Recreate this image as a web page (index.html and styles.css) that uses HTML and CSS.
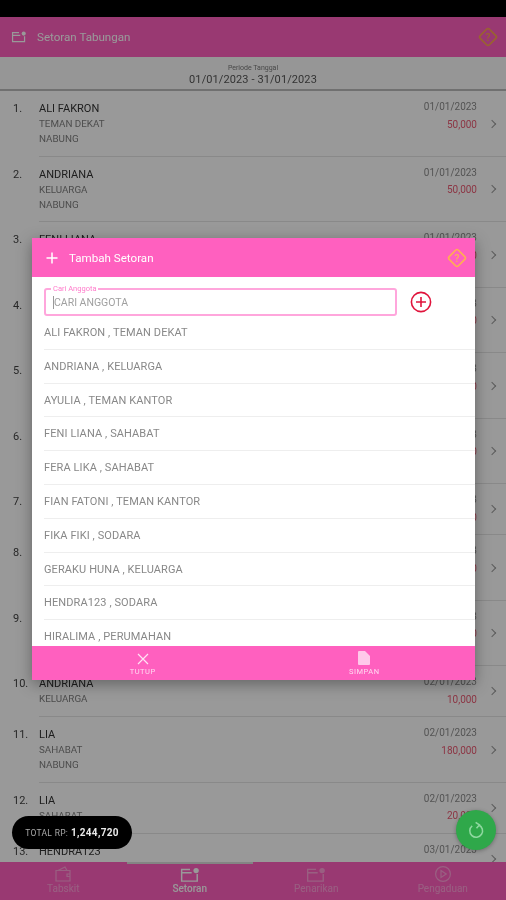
FILE: index.html
```html
<!DOCTYPE html>
<html lang="en">
<head>
  <meta charset="UTF-8" />
  <title>Setoran Tabungan</title>
  <link rel="stylesheet" href="styles.css">
</head>
<body>
  <div class="screen">
    <div class="status-bar"></div>

    <!-- Header -->
    <div class="app-header">
      <svg class="app-header-icon" viewBox="0 0 18 14" width="16" height="12"><path d="M9 2H1.5v10.5h14V6M1.5 5h9" fill="none" stroke="#fff" stroke-width="1.4"/><circle cx="14.5" cy="3" r="2.4" fill="#fff"/></svg>
      <span class="app-header-title">Setoran Tabungan</span>
      <svg class="help-icon" viewBox="0 0 22 22" width="22" height="22"><rect x="4.5" y="4.5" width="13" height="13" rx="2" transform="rotate(45 11 11)" fill="none" stroke="#ffa64d" stroke-width="1.6"/><text x="11" y="14.5" text-anchor="middle" class="help-mark">?</text></svg>
    </div>

    <div class="period">
      <div class="period-label">Periode Tanggal</div>
      <div class="period-dates">01/01/2023 - 31/01/2023</div>
    </div>

    <!-- Setoran list -->
    <div class="list">
      <div class="row"><div class="num">1.</div><div class="row-body"><div class="row-info"><div class="name">ALI FAKRON</div><div class="sub">TEMAN DEKAT</div><div class="sub">NABUNG</div></div><div class="row-side"><div class="date">01/01/2023</div><div class="amount">50,000</div></div><div class="chevron"></div></div></div>
      <div class="row"><div class="num">2.</div><div class="row-body"><div class="row-info"><div class="name">ANDRIANA</div><div class="sub">KELUARGA</div><div class="sub">NABUNG</div></div><div class="row-side"><div class="date">01/01/2023</div><div class="amount">50,000</div></div><div class="chevron"></div></div></div>
      <div class="row"><div class="num">3.</div><div class="row-body"><div class="row-info"><div class="name">FENI LIANA</div><div class="sub">SAHABAT</div><div class="sub">NABUNG</div></div><div class="row-side"><div class="date">01/01/2023</div><div class="amount">50,000</div></div><div class="chevron"></div></div></div>
      <div class="row"><div class="num">4.</div><div class="row-body"><div class="row-info"><div class="name">FERA LIKA</div><div class="sub">SAHABAT</div><div class="sub">NABUNG</div></div><div class="row-side"><div class="date">01/01/2023</div><div class="amount">50,000</div></div><div class="chevron"></div></div></div>
      <div class="row"><div class="num">5.</div><div class="row-body"><div class="row-info"><div class="name">FIKA FIKI</div><div class="sub">SODARA</div><div class="sub">NABUNG</div></div><div class="row-side"><div class="date">01/01/2023</div><div class="amount">50,000</div></div><div class="chevron"></div></div></div>
      <div class="row"><div class="num">6.</div><div class="row-body"><div class="row-info"><div class="name">AYULIA</div><div class="sub">TEMAN KANTOR</div><div class="sub">NABUNG</div></div><div class="row-side"><div class="date">01/01/2023</div><div class="amount">50,000</div></div><div class="chevron"></div></div></div>
      <div class="row"><div class="num">7.</div><div class="row-body"><div class="row-info"><div class="name">HIRALIMA</div><div class="sub">PERUMAHAN</div></div><div class="row-side"><div class="date">01/01/2023</div><div class="amount">20,000</div></div><div class="chevron"></div></div></div>
      <div class="row"><div class="num">8.</div><div class="row-body"><div class="row-info"><div class="name">GERAKU HUNA</div><div class="sub">KELUARGA</div><div class="sub">NABUNG</div></div><div class="row-side"><div class="date">02/01/2023</div><div class="amount">50,000</div></div><div class="chevron"></div></div></div>
      <div class="row"><div class="num">9.</div><div class="row-body"><div class="row-info"><div class="name">FIAN FATONI</div><div class="sub">TEMAN KANTOR</div><div class="sub">NABUNG</div></div><div class="row-side"><div class="date">02/01/2023</div><div class="amount">50,000</div></div><div class="chevron"></div></div></div>
      <div class="row"><div class="num">10.</div><div class="row-body"><div class="row-info"><div class="name">ANDRIANA</div><div class="sub">KELUARGA</div></div><div class="row-side"><div class="date">02/01/2023</div><div class="amount">10,000</div></div><div class="chevron"></div></div></div>
      <div class="row"><div class="num">11.</div><div class="row-body"><div class="row-info"><div class="name">LIA</div><div class="sub">SAHABAT</div><div class="sub">NABUNG</div></div><div class="row-side"><div class="date">02/01/2023</div><div class="amount">180,000</div></div><div class="chevron"></div></div></div>
      <div class="row"><div class="num">12.</div><div class="row-body"><div class="row-info"><div class="name">LIA</div><div class="sub">SAHABAT</div></div><div class="row-side"><div class="date">02/01/2023</div><div class="amount">20,000</div></div><div class="chevron"></div></div></div>
      <div class="row"><div class="num">13.</div><div class="row-body"><div class="row-info"><div class="name">HENDRA123</div></div><div class="row-side"><div class="date">03/01/2023</div></div><div class="chevron"></div></div></div>
    </div>

    <!-- Bottom tabs -->
    <div class="tabs">
      <div class="tab">
        <svg viewBox="0 0 18 18" width="18" height="18"><path d="M2 5.5h14v10.5H2zM4 5.5 11 2l2 3.5M16 9h-3v2.5h3" fill="none" stroke="#fff" stroke-width="1.2"/></svg>
        <span>Tabskit</span>
      </div>
      <div class="tab tab-active">
        <svg viewBox="0 0 18 14" width="20" height="16"><path d="M9 2H1.5v10.5h14V6M1.5 5h9" fill="none" stroke="#fff" stroke-width="1.3"/><circle cx="14.5" cy="3" r="2.4" fill="#fff"/></svg>
        <span>Setoran</span>
      </div>
      <div class="tab">
        <svg viewBox="0 0 18 14" width="20" height="16"><path d="M9 2H1.5v10.5h14V6M1.5 5h9" fill="none" stroke="#fff" stroke-width="1.2"/><circle cx="14.5" cy="3" r="2.4" fill="#fff"/></svg>
        <span>Penarikan</span>
      </div>
      <div class="tab">
        <svg viewBox="0 0 18 18" width="18" height="18"><circle cx="9" cy="9" r="7.4" fill="none" stroke="#fff" stroke-width="1.2"/><path d="M7 5.6 12.2 9 7 12.4z" fill="none" stroke="#fff" stroke-width="1.2"/></svg>
        <span>Pengaduan</span>
      </div>
    </div>

    <div class="overlay"></div>

    <div class="total-pill"><span class="total-label">TOTAL RP:</span> <b>1,244,720</b></div>
    <div class="fab">
      <svg viewBox="0 0 22 22" width="19" height="19"><path d="M13.6 4.6A7.4 7.4 0 1 1 6 5.6" fill="none" stroke="#8fd8a0" stroke-width="1.8"/><path d="M10 1.5 14.4 4.6 11 8.4" fill="none" stroke="#8fd8a0" stroke-width="1.8"/></svg>
    </div>

    <!-- Tambah Setoran dialog -->
    <div class="modal">
      <div class="modal-header">
        <svg viewBox="0 0 12 12" width="12" height="12"><path d="M6 .5v11M.5 6h11" stroke="#fff" stroke-width="1.5"/></svg>
        <span class="modal-title">Tambah Setoran</span>
        <svg class="help-icon" viewBox="0 0 22 22" width="22" height="22"><rect x="4.5" y="4.5" width="13" height="13" rx="2" transform="rotate(45 11 11)" fill="none" stroke="#ffb04f" stroke-width="1.6"/><text x="11" y="14.5" text-anchor="middle" class="help-mark help-mark-bright">?</text></svg>
      </div>

      <div class="search">
        <div class="search-field">
          <span class="search-label">Cari Anggota</span>
          <span class="caret"></span><span class="search-placeholder">CARI ANGGOTA</span>
        </div>
        <svg class="search-add" viewBox="0 0 22 22" width="22" height="22"><circle cx="11" cy="11" r="9.6" fill="none" stroke="#e0143c" stroke-width="1.6"/><path d="M11 6v10M6 11h10" stroke="#e0143c" stroke-width="1.6"/></svg>
      </div>

      <ul class="member-list">
        <li>ALI FAKRON , TEMAN DEKAT</li>
        <li>ANDRIANA , KELUARGA</li>
        <li>AYULIA , TEMAN KANTOR</li>
        <li>FENI LIANA , SAHABAT</li>
        <li>FERA LIKA , SAHABAT</li>
        <li>FIAN FATONI , TEMAN KANTOR</li>
        <li>FIKA FIKI , SODARA</li>
        <li>GERAKU HUNA , KELUARGA</li>
        <li>HENDRA123 , SODARA</li>
        <li>HIRALIMA , PERUMAHAN</li>
      </ul>

      <div class="modal-footer">
        <div class="modal-action">
          <svg viewBox="0 0 12 12" width="12" height="12"><path d="M1 1l10 10M11 1 1 11" stroke="#ffe3f4" stroke-width="1.2"/></svg>
          <span>TUTUP</span>
        </div>
        <div class="modal-action">
          <svg viewBox="0 0 12 14" width="12" height="14"><path d="M0 1a1 1 0 0 1 1-1h6l5 5v8a1 1 0 0 1-1 1H1a1 1 0 0 1-1-1z" fill="#ffc9ea"/></svg>
          <span>SIMPAN</span>
        </div>
      </div>
    </div>
  </div>
</body>
</html>
```

FILE: styles.css
```css
* {
  box-sizing: border-box;
}

body {
  margin: 0;
  font-family: Roboto, 'Liberation Sans', sans-serif;
  background: #000;
}

.screen {
  position: relative;
  width: 506px;
  height: 900px;
  display: flex;
  flex-direction: column;
  overflow: hidden;
  background: #fff;
  filter: blur(0.6px);
}

.status-bar {
  height: 17px;
  background: #000;
  flex-shrink: 0;
}

.app-header {
  height: 40px;
  flex-shrink: 0;
  display: flex;
  align-items: center;
  padding: 0 7px 0 11px;
  background: #ff60bf;
  color: #fff;
}

.app-header-title {
  margin-left: 10px;
  font-size: 11.6px;
  flex-grow: 1;
}

.help-mark {
  font-size: 10px;
  font-weight: 500;
  fill: #ffa64d;
}

.help-mark-bright {
  fill: #ffb04f;
}

.period {
  height: 34px;
  flex-shrink: 0;
  text-align: center;
  padding-top: 7px;
  background: #fbfbfb;
  border-bottom: 2px solid #bbb;
  color: #555;
}

.period-label {
  font-size: 7px;
  line-height: 8px;
  color: #777;
}

.period-dates {
  font-size: 11px;
  line-height: 15px;
  letter-spacing: 0.1px;
}

.list {
  flex: 1;
  min-height: 0;
  overflow: hidden;
}

.row {
  display: flex;
  padding-left: 13px;
}

.num {
  width: 26px;
  flex-shrink: 0;
  padding-top: 10px;
  font-size: 11px;
  line-height: 15px;
  color: #444;
}

.row-body {
  flex: 1;
  min-height: 51px;
  display: flex;
  align-items: center;
  padding: 10px 11px 9.5px 0;
  border-bottom: 1px solid #e4e4e4;
}

.row-info {
  flex: 1;
  align-self: flex-start;
}

.name {
  font-size: 11px;
  line-height: 15px;
  color: #333;
}

.sub {
  font-size: 9.8px;
  line-height: 15px;
  color: #808080;
}

.row-side {
  align-self: flex-start;
  text-align: right;
}

.date {
  margin-top: -1px;
  font-size: 10px;
  line-height: 14px;
  color: #8c8c8c;
}

.amount {
  margin-top: 3.5px;
  font-size: 10px;
  line-height: 14px;
  color: #ea5a72;
}

.chevron {
  width: 6px;
  height: 6px;
  margin-left: 12px;
  border-top: 1px solid #999;
  border-right: 1px solid #999;
  transform: rotate(45deg);
}

.tabs {
  height: 38px;
  flex-shrink: 0;
  display: flex;
  background: #ff60bf;
  color: #fff;
}

.tab {
  flex: 1;
  display: flex;
  flex-direction: column;
  align-items: center;
  justify-content: flex-end;
  padding-bottom: 5px;
  font-size: 10px;
  line-height: 12px;
  opacity: 0.4;
}

.tab-active {
  opacity: 1;
  font-weight: 500;
  border-top: 2px solid #ddd;
}

.overlay {
  position: absolute;
  inset: 0;
  background: rgba(0, 0, 0, 0.4);
}

.total-pill {
  position: absolute;
  left: 12px;
  top: 816px;
  width: 120px;
  height: 33px;
  border-radius: 17px;
  background: #000;
  color: #e8e8e8;
  font-size: 10px;
  line-height: 33px;
  text-align: center;
  letter-spacing: 0.3px;
}

.total-label {
  font-size: 8.5px;
  color: #aaa;
}

.fab {
  position: absolute;
  left: 456px;
  top: 810px;
  width: 40px;
  height: 40px;
  border-radius: 50%;
  background: #2fa84a;
  display: flex;
  align-items: center;
  justify-content: center;
  box-shadow: 0 1px 4px rgba(0, 0, 0, 0.3);
}

.modal {
  position: absolute;
  left: 32px;
  top: 238px;
  width: 443px;
  height: 442px;
  display: flex;
  flex-direction: column;
  background: #fff;
  box-shadow: 0 4px 14px rgba(0, 0, 0, 0.35);
}

.modal-header {
  height: 39px;
  flex-shrink: 0;
  display: flex;
  align-items: center;
  padding: 0 7px 0 14px;
  background: #ff60bf;
  color: #fff;
}

.modal-title {
  margin-left: 11px;
  flex-grow: 1;
  font-size: 11.6px;
}

.search {
  flex-shrink: 0;
  display: flex;
  align-items: center;
  padding: 11px 0 0 12px;
}

.search-field {
  position: relative;
  width: 353px;
  height: 28px;
  display: flex;
  align-items: center;
  padding-left: 7px;
  border: 2px solid #ffa6dc;
  border-radius: 3px;
}

.search-label {
  position: absolute;
  left: 5px;
  top: -6px;
  padding: 0 2px;
  background: #fff;
  font-size: 7.5px;
  line-height: 9px;
  color: #ff7ccb;
}

.caret {
  width: 1px;
  height: 13px;
  background: #999;
}

.search-placeholder {
  font-size: 10.5px;
  color: #a0a0a0;
}

.search-add {
  margin-left: 13px;
}

.member-list {
  list-style-type: none;
  margin: 0;
  padding: 0 0 0 12px;
  flex: 1;
  min-height: 0;
  overflow: hidden;
}

.member-list li {
  height: 33.8px;
  line-height: 33px;
  font-size: 11px;
  letter-spacing: 0.1px;
  color: #888;
  border-bottom: 1px solid #eee;
}

.modal-footer {
  height: 34px;
  flex-shrink: 0;
  display: flex;
  background: #ff60bf;
}

.modal-action {
  flex: 1;
  display: flex;
  flex-direction: column;
  align-items: center;
  justify-content: flex-end;
  gap: 3px;
  padding-bottom: 4px;
  font-size: 7.5px;
  line-height: 8px;
  letter-spacing: 0.5px;
  color: #ffd9f0;
}
```
